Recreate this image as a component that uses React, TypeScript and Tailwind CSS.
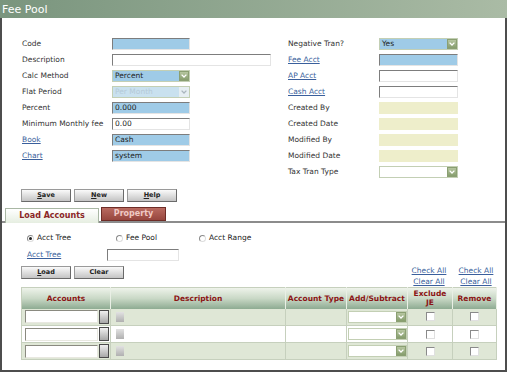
import React from "react";

function Chevron({ color }: { color: string }) {
  return (
    <svg width="6" height="4" viewBox="0 0 6 4">
      <polyline points="0.6,0.6 3,3 5.4,0.6" fill="none" stroke={color} strokeWidth="1.3" />
    </svg>
  );
}

function Select({ value, fill, width = "w-[79px]", disabled }: { value?: string; fill: string; width?: string; disabled?: boolean }) {
  return (
    <div className={`flex h-[12px] ${width} border border-[#c3cfb4] ${fill}`}>
      <span className={`flex-1 pl-[2px] text-[7.5px] leading-[10px] ${disabled ? "text-[#b5cad8]" : "text-[#222]"}`}>{value}</span>
      {disabled ? (
        <span className="flex w-[10px] items-center justify-center bg-[#e6eef2]">
          <Chevron color="#aab6be" />
        </span>
      ) : (
        <span className="flex w-[10px] items-center justify-center border border-[#8a9f72] bg-linear-to-b from-[#b6c6a0] to-[#869d6d]">
          <Chevron color="#ffffff" />
        </span>
      )}
    </div>
  );
}

function Input({ value, fill = "bg-white", width = "w-[79px]", flat }: { value?: string; fill?: string; width?: string; flat?: boolean }) {
  return (
    <div
      className={`h-[12px] ${width} ${fill} pl-[2px] text-[7.5px] leading-[10px] text-[#222] ${
        flat ? "" : "border border-t-[#7d7d7d] border-l-[#7d7d7d] border-r-[#e4e4e4] border-b-[#e4e4e4]"
      }`}
    >
      {value}
    </div>
  );
}

function Label({ text, link, width }: { text: string; link?: boolean; width: string }) {
  return (
    <span className={`${width} text-[7.5px] ${link ? "text-[#3a5f9c] underline" : "text-[#333]"}`}>{text}</span>
  );
}

function Btn({ label, under = true }: { label: string; under?: boolean }) {
  return (
    <button className="h-[13px] w-[50px] border border-[#6a6a6a] border-t-[#9a9a9a] border-l-[#9a9a9a] bg-linear-to-b from-[#fafafa] to-[#c4c4c4] text-[6.5px] font-bold leading-[11px] text-[#222]">
      {under ? (
        <>
          <span className="underline">{label[0]}</span>
          {label.slice(1)}
        </>
      ) : (
        label
      )}
    </button>
  );
}

function Radio({ checked, label }: { checked?: boolean; label: string }) {
  return (
    <span className="flex items-center gap-[3px] text-[7.5px] text-[#222]">
      <span className="flex h-[7px] w-[7px] items-center justify-center rounded-full border border-[#8a8a8a] border-r-[#ddd] border-b-[#ddd] bg-white">
        {checked && <span className="h-[3px] w-[3px] rounded-full bg-[#222]" />}
      </span>
      {label}
    </span>
  );
}

function Check() {
  return <span className="mx-auto block h-[9px] w-[9px] border border-[#8a8a8a] border-r-[#e0e0e0] border-b-[#e0e0e0] bg-white" />;
}

const blue = "bg-[#9fcbe7]";
const yellow = "bg-[#eeeecb]";

export default function App() {
  const left: [string, boolean, React.ReactNode][] = [
    ["Code", false, <Input fill={blue} width="w-[78px]" />],
    ["Description", false, <Input width="w-[159px]" />],
    ["Calc Method", false, <Select value="Percent" fill={blue} width="w-[78px]" />],
    ["Flat Period", false, <Select value="Per Month" fill="bg-[#c9e1ef]" width="w-[78px]" disabled />],
    ["Percent", false, <Input value="0.000" fill={blue} width="w-[78px]" />],
    ["Minimum Monthly fee", false, <Input value="0.00" width="w-[78px]" />],
    ["Book", true, <Input value="Cash" fill={blue} width="w-[78px]" />],
    ["Chart", true, <Input value="system" fill={blue} width="w-[78px]" />],
  ];
  const right: [string, boolean, React.ReactNode][] = [
    ["Negative Tran?", false, <Select value="Yes" fill={blue} />],
    ["Fee Acct", true, <Input fill={blue} />],
    ["AP Acct", true, <Input />],
    ["Cash Acct", true, <Input />],
    ["Created By", false, <Input fill={yellow} flat />],
    ["Created Date", false, <Input fill={yellow} flat />],
    ["Modified By", false, <Input fill={yellow} flat />],
    ["Modified Date", false, <Input fill={yellow} flat />],
    ["Tax Tran Type", false, <Select fill="bg-white" />],
  ];

  const th = "border-r border-[#e9efe5] px-0 text-center align-middle text-[7.5px] font-bold leading-[9px] text-[#8b1414]";
  const td = "h-[17px] border-r border-b border-[#c6d0bd] p-0 align-middle text-[7.5px] leading-[0]";

  return (
    <div className="h-[373px] w-[508px] bg-white font-['DejaVu_Sans',sans-serif]">
      <div className="h-[18px] w-[507px] bg-linear-to-r from-[#7a957e] to-[#aabba5] pl-[2px] text-[11px] leading-[19px] text-white">
        Fee Pool
      </div>
      <div className="h-[354px] w-[507px] border-x-2 border-b-2 border-[#4d4d4d]">
        {/* header fields */}
        <div className="flex pl-[20px] pt-[18px]">
          <div className="w-[266px]">
            {left.map(([l, link, f]) => (
              <div key={l} className="flex h-[16px] items-center">
                <Label text={l} link={link} width="w-[90px]" />
                {f}
              </div>
            ))}
          </div>
          <div>
            {right.map(([l, link, f]) => (
              <div key={l} className="flex h-[16px] items-center">
                <Label text={l} link={link} width="w-[91px]" />
                {f}
              </div>
            ))}
          </div>
        </div>

        <div className="mt-[9px] flex gap-[3px] pl-[19px]">
          <Btn label="Save" />
          <Btn label="New" />
          <Btn label="Help" />
        </div>

        {/* tabs */}
        <div className="mt-[7px] flex h-[14px] items-end gap-[2px] border-b-2 border-[#8c8c8c] pl-[3px]">
          <div className="-mb-[2px] flex h-[15px] w-[94px] items-center justify-center border border-b-0 border-[#a9b7a4] bg-linear-to-b from-white to-[#e6eee1] text-[8px] font-bold text-[#8b2626]">
            Load Accounts
          </div>
          <div className="flex h-[14px] w-[65px] items-center justify-center border border-[#6e2d27] bg-linear-to-b from-[#b96a60] to-[#97463e] text-[8px] font-bold text-[#f0c9c4]">
            Property
          </div>
        </div>

        <div className="mt-[9px] flex h-[12px] items-center pl-[25px]">
          <span className="w-[89px]"><Radio checked label="Acct Tree" /></span>
          <span className="w-[83px]"><Radio label="Fee Pool" /></span>
          <Radio label="Acct Range" />
        </div>

        <div className="mt-[5px] flex h-[12px] items-center pl-[25px]">
          <Label text="Acct Tree" link width="w-[80px]" />
          <Input width="w-[72px]" />
        </div>

        <div className="mt-[5px] flex h-[21px] w-[496px] items-start pl-[19px]">
          <div className="flex gap-[3px]">
            <Btn label="Load" />
            <Btn label="Clear" under={false} />
          </div>
          <div className="ml-auto flex text-[7.5px] leading-[10.5px] text-[#3a5f9c] underline">
            <div className="flex w-[50px] flex-col items-center">
              <span>Check All</span>
              <span>Clear All</span>
            </div>
            <div className="flex w-[44px] flex-col items-center">
              <span>Check All</span>
              <span>Clear All</span>
            </div>
          </div>
        </div>

        <div className="pl-[19px]">
          <table className="w-[475px] table-fixed border-collapse border border-[#c6d0bd]">
            <colgroup>
              <col className="w-[89px]" />
              <col className="w-[175px]" />
              <col className="w-[61px]" />
              <col className="w-[61px]" />
              <col className="w-[45px]" />
              <col className="w-[44px]" />
            </colgroup>
            <thead>
              <tr className="h-[21px] bg-linear-to-b from-[#eef3ea] via-[#c9d8c6] to-[#8eab92]">
                <th className={th}>Accounts</th>
                <th className={th}>Description</th>
                <th className={th}>Account Type</th>
                <th className={th}>Add/Subtract</th>
                <th className={th}>
                  Exclude
                  <br />
                  JE
                </th>
                <th className={th}>Remove</th>
              </tr>
            </thead>
            <tbody>
              {[0, 1, 2].map((i) => (
                <tr key={i} className={i === 1 ? "bg-white" : "bg-[#dfe7d6]"}>
                  <td className={td}>
                    <div className="flex items-center gap-[1px] pl-[3px]">
                      <div className="h-[13px] w-[73px] border border-[#8a8a80] border-r-[#e8e8e0] border-b-[#e8e8e0] bg-white" />
                      <div className="h-[14px] w-[10px] border border-[#4a4a4a] bg-linear-to-b from-[#f0f0f0] to-[#a8a8a8]" />
                    </div>
                  </td>
                  <td className={td}>
                    <div className="ml-[5px] h-[10px] w-[8px] bg-linear-to-b from-[#e2e2e2] to-[#b0b0b0]" />
                  </td>
                  <td className={td} />
                  <td className={td}>
                    <div className="pl-[1px]">
                      <Select fill="bg-white" width="w-[59px]" />
                    </div>
                  </td>
                  <td className={td}>
                    <Check />
                  </td>
                  <td className={td}>
                    <Check />
                  </td>
                </tr>
              ))}
            </tbody>
          </table>
        </div>
      </div>
    </div>
  );
}
